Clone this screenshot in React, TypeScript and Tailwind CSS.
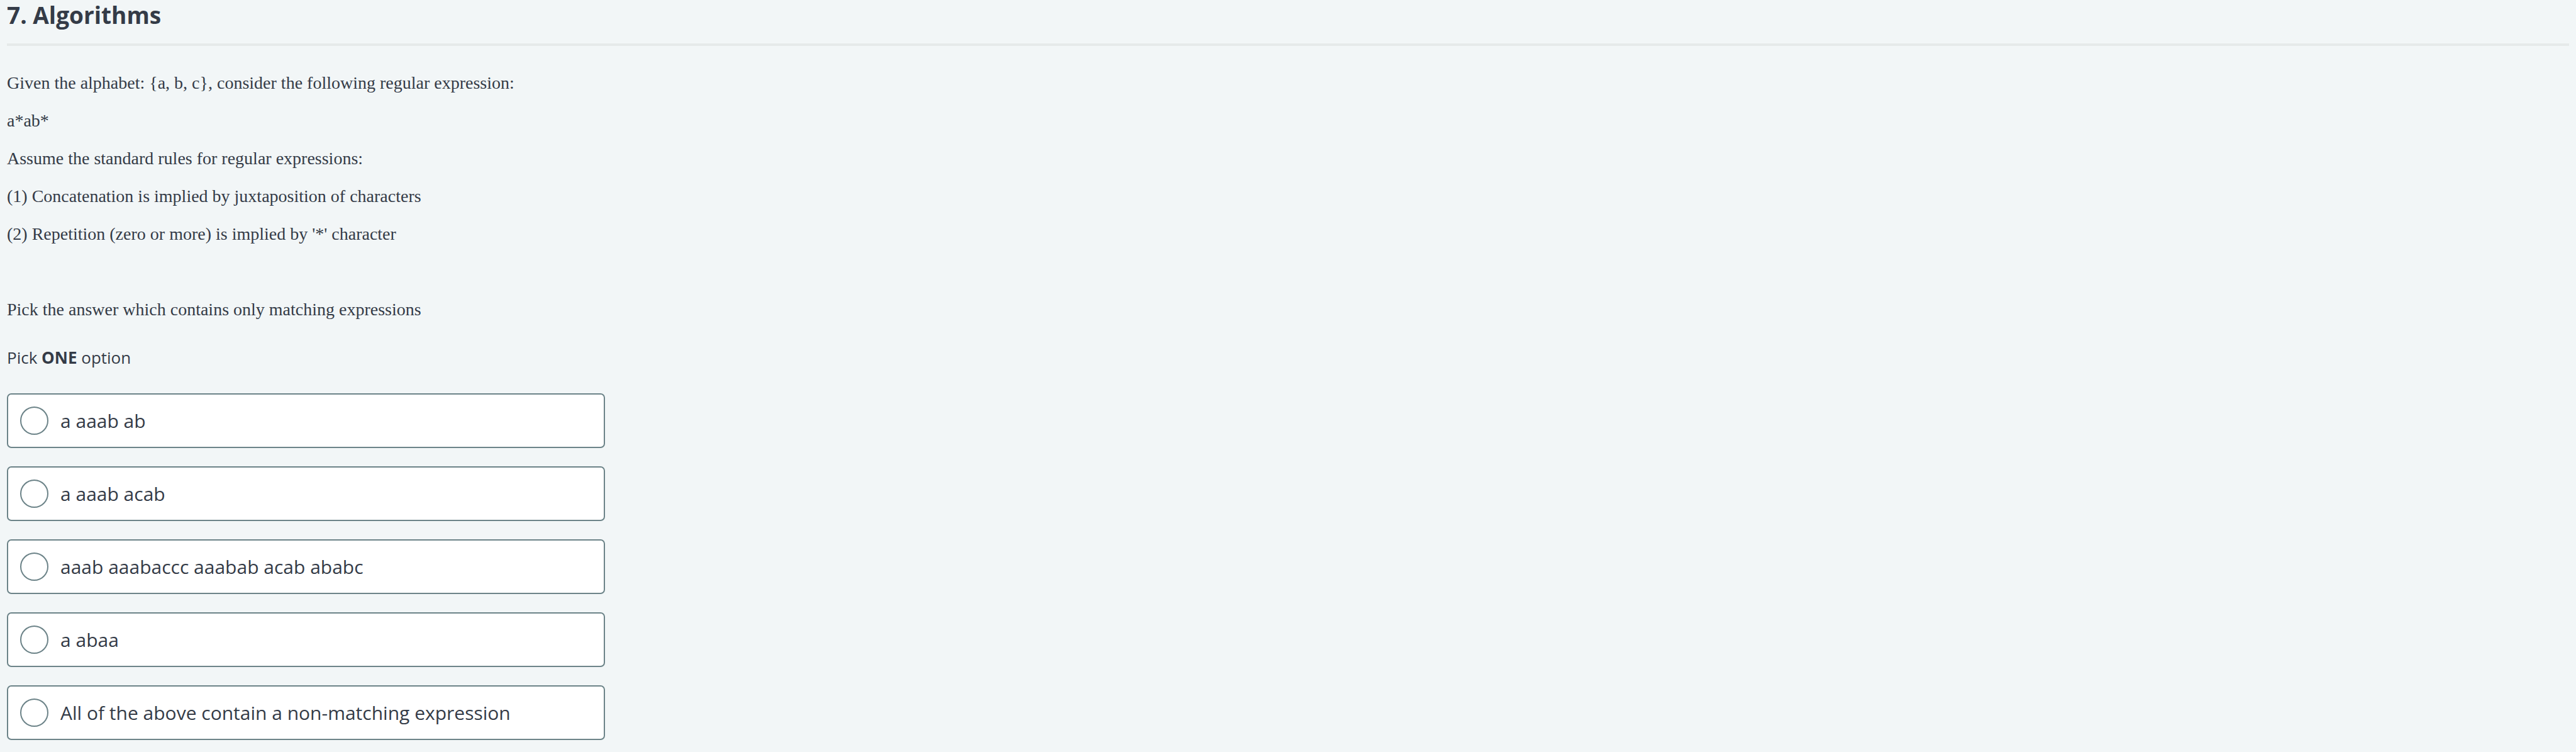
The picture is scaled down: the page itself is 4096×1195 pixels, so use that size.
import { useState } from "react";

const statement = [
  "Given the alphabet: {a, b, c}, consider the following regular expression:",
  "a*ab*",
  "Assume the standard rules for regular expressions:",
  "(1) Concatenation is implied by juxtaposition of characters",
  "(2) Repetition (zero or more) is implied by '*' character",
  "\u00a0",
  "Pick the answer which contains only matching expressions",
];

const options = [
  "a aaab ab",
  "a aaab acab",
  "aaab aaabaccc aaabab acab ababc",
  "a abaa",
  "All of the above contain a non-matching expression",
];

function Option({
  label,
  checked,
  onSelect,
}: {
  label: string;
  checked: boolean;
  onSelect: () => void;
}) {
  return (
    <label className="flex cursor-pointer items-center gap-[19px] rounded-[7px] border-2 border-[#6c8388] bg-white px-[19px] py-[19px]">
      <input
        type="radio"
        name="answer"
        checked={checked}
        onChange={onSelect}
        className="size-[45px] shrink-0 cursor-pointer appearance-none rounded-full border-2 border-[#6c8388] bg-white checked:border-[12px]"
      />
      <span className="text-[30px] leading-[45px]">{label}</span>
    </label>
  );
}

export default function App() {
  const [answer, setAnswer] = useState<number | null>(null);

  return (
    <main className="min-h-screen bg-[#f2f6f7] px-[11px] font-['Open_Sans',sans-serif] text-[#343b47]">
      <h1 className="border-b-4 border-[#e6eaea] pb-[21px] text-[37px] leading-[48px] font-bold">
        7. Algorithms
      </h1>

      <section className="mt-11 flex flex-col gap-[30px] font-['Liberation_Serif',serif] text-[28px] leading-[30px]">
        {statement.map((line, i) => (
          <p key={i}>{line}</p>
        ))}
      </section>

      <fieldset className="mt-[43px] max-w-[951px]">
        <legend className="text-[26px] leading-9">
          Pick <strong className="font-bold">ONE</strong> option
        </legend>
        <div className="mt-[39px] flex flex-col gap-[29px]">
          {options.map((label, i) => (
            <Option
              key={label}
              label={label}
              checked={answer === i}
              onSelect={() => setAnswer(i)}
            />
          ))}
        </div>
      </fieldset>
    </main>
  );
}
